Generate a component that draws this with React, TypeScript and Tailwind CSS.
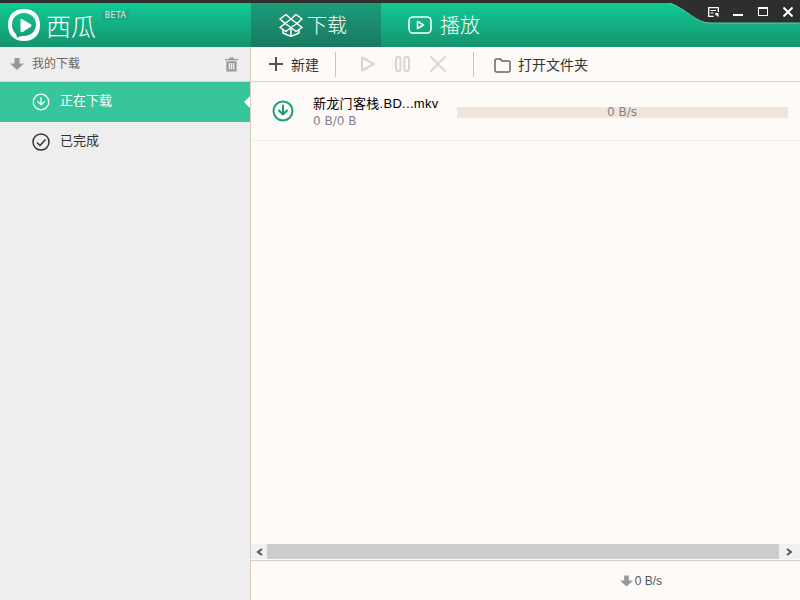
import React from "react";

function Logo() {
  return (
    <svg width="32" height="32" viewBox="0 0 32 32" className="shrink-0">
      <path fillRule="evenodd" fill="#fff" d="M16 0C26 0 32 6 32 16 32 26 26 32 16 32 6 32 0 26 0 16 0 6 6 0 16 0zM16 4C9 4 4 9 4 15.500 4 19 5 22 7 24 8.500 26 9 27 9 29 11 27.500 13 27 16 27 23 27 28 22 28 15.500 28 9 23 4 16 4z" />
      <path fill="#fff" d="M12.500 11.500c0-1.300 1-1.800 2.200-1.100l8 4.800c1 .7 1 1.800 0 2.500l-8 5.400c-1.200.6-2.200.1-2.200-1.100z" />
    </svg>
  );
}

function BoxIcon() {
  return (
    <svg width="24" height="24" viewBox="0 0 24 24" fill="none" stroke="#fff" strokeWidth="1.500" strokeLinejoin="round" className="shrink-0">
      <path d="M7 1.500 1 6 6 10.500 12 6z" />
      <path d="M17 1.500 23 6 18 10.500 12 6z" />
      <path d="M6 10.500 1 14.500 7 18.500 12 14.500z" />
      <path d="M18 10.500 23 14.500 17 18.500 12 14.500z" />
      <path d="M4 16.500v3.500l8 3.500 8-3.500v-3.500M12 14.500v9" />
    </svg>
  );
}

function PlayTabIcon() {
  return (
    <svg width="24" height="18" viewBox="0 0 24 18" fill="none" stroke="#fff" strokeWidth="1.600" className="shrink-0">
      <rect x="1" y="1" width="22" height="16" rx="4" />
      <path d="M9.500 5.500v7l6-3.500z" strokeLinejoin="round" />
    </svg>
  );
}

function DownArrow({ color = "#999", w = 14, h = 12 }: { color?: string; w?: number; h?: number }) {
  return (
    <svg width={w} height={h} viewBox="0 0 14 12" className="shrink-0">
      <path fill={color} d="M4.500 0h5v5.500H14L7 12 0 5.500h4.500z" />
    </svg>
  );
}

function CircleDown({ color, size, sw }: { color: string; size: number; sw: number }) {
  return (
    <svg width={size} height={size} viewBox="0 0 22 22" fill="none" stroke={color} strokeWidth={sw} className="shrink-0">
      <circle cx="11" cy="11" r="9.500" />
      <path d="M11 5.500v9M7 10.500l4 4 4-4" strokeLinecap="round" strokeLinejoin="round" />
    </svg>
  );
}

export default function App() {
  return (
    <div className="w-[800px] h-[600px] overflow-hidden flex flex-col relative bg-[#fefaf8]">
      <div className="font-['Liberation_Sans','Noto_Sans_CJK_SC',sans-serif] flex flex-col h-full">
        {/* top strip */}
        <div className="h-[3px] bg-[#2e2e2e] shrink-0" />
        {/* header */}
        <div className="h-[44px] shrink-0 flex bg-gradient-to-b from-[#0ecb95] to-[#15936f] text-white">
          <div className="w-[251px] shrink-0 flex items-center pl-[8px] relative">
            <Logo />
            <span className="ml-[6px] text-[25px] leading-[30px] font-light font-['Noto_Sans_CJK_SC',sans-serif]">西瓜</span>
            <span className="ml-[6px] -mt-[20px] w-[27px] h-[9px] bg-[#2aa184] text-[8px] leading-[9px] text-center text-[#d5f2e8] font-['DejaVu_Sans',sans-serif] tracking-[0.3px]">
              BETA
            </span>
          </div>
          <div className="w-[130px] shrink-0 flex items-center pl-[28px] gap-[4px] bg-gradient-to-b from-[#1b9c7a] to-[#197a60]">
            <BoxIcon />
            <span className="text-[20px] font-['Noto_Sans_CJK_SC',sans-serif] font-light">下载</span>
          </div>
          <div className="w-[130px] shrink-0 flex items-center pl-[27px] gap-[8px]">
            <PlayTabIcon />
            <span className="text-[20px] font-['Noto_Sans_CJK_SC',sans-serif] font-light">播放</span>
          </div>
        </div>

        {/* body */}
        <div className="flex-1 min-h-0 flex">
          {/* sidebar */}
          <div className="w-[250px] shrink-0 bg-[#eeeeee] flex flex-col">
            <div className="h-[35px] shrink-0 flex items-center pl-[10px] pr-[12px] border-b border-[#d8d2c8]">
              <DownArrow />
              <span className="ml-[8px] text-[12px] text-[#666]">我的下载</span>
              <svg width="13" height="15" viewBox="0 0 14 15" className="ml-auto shrink-0">
                <path fill="#999" fillRule="evenodd" d="M4.500 0h5v1.500H14V3H0V1.500h4.500zM1.500 4h11v11h-11zM4 6v7h1.500V6zM6.300 6v7h1.500V6zM8.600 6v7h1.500V6z" />
              </svg>
            </div>
            <div className="h-[40px] shrink-0 bg-[#37c59c] flex items-center pl-[32px] text-white relative">
              <CircleDown color="#fff" size={18} sw={1.500} />
              <span className="ml-[10px] text-[13px] leading-[18px] -mt-[2px]">正在下载</span>
              <div className="absolute right-0 top-[14px] w-0 h-0 border-y-[6px] border-y-transparent border-r-[6px] border-r-white" />
            </div>
            <div className="h-[40px] shrink-0 flex items-center pl-[32px] text-[#333]">
              <svg width="18" height="18" viewBox="0 0 18 18" fill="none" stroke="#333" strokeWidth="1.500" className="shrink-0">
                <circle cx="9" cy="9" r="8" />
                <path d="M5 9.500l3 3 5.500-6" />
              </svg>
              <span className="ml-[10px] text-[13px] leading-[18px] -mt-[2px]">已完成</span>
            </div>
          </div>

          {/* main */}
          <div className="flex-1 min-w-0 flex flex-col border-l border-[#d8cfc4]">
            <div className="h-[35px] shrink-0 flex items-center border-b border-[#d8d2c8] text-[#333]">
              <svg width="14" height="14" viewBox="0 0 14 14" className="ml-[18px] shrink-0">
                <path fill="#555" d="M6 0h2v6h6v2H8v6H6V8H0V6h6z" />
              </svg>
              <span className="ml-[8px] text-[14px] leading-[20px] mt-[2px]">新建</span>
              <div className="ml-[16px] w-px h-[25px] bg-[#c4c4c4]" />
              <svg width="16" height="16" viewBox="0 0 16 16" fill="none" stroke="#d6d6d6" strokeWidth="2" className="ml-[24px] shrink-0">
                <path d="M2 1.500v13l12-6.500z" strokeLinejoin="round" />
              </svg>
              <svg width="15" height="16" viewBox="0 0 15 16" fill="none" stroke="#d6d6d6" strokeWidth="2" className="ml-[19px] shrink-0">
                <rect x="1" y="1" width="4.500" height="14" rx="2" />
                <rect x="9.500" y="1" width="4.500" height="14" rx="2" />
              </svg>
              <svg width="18" height="16" viewBox="0 0 17 16" fill="none" stroke="#d6d6d6" strokeWidth="2" className="ml-[19px] shrink-0">
                <path d="M1 .5l15 15M16 .5l-15 15" />
              </svg>
              <div className="ml-[26px] w-px h-[25px] bg-[#c4c4c4]" />
              <svg width="17" height="15" viewBox="0 0 17 15" fill="none" stroke="#666" strokeWidth="1.500" className="ml-[20px] shrink-0 mt-[2px]">
                <path d="M2.500 1h4l1.500 2h6.500a1.500 1.500 0 0 1 1.500 1.500v8a1.500 1.500 0 0 1-1.500 1.500h-12A1.500 1.500 0 0 1 1 12.500V2.500A1.500 1.500 0 0 1 2.500 1z" strokeLinejoin="round" />
              </svg>
              <span className="ml-[7px] text-[14px] leading-[20px] mt-[2px]">打开文件夹</span>
            </div>

            <div className="flex-1 min-h-0 flex flex-col">
              <div className="h-[59px] shrink-0 flex items-center border-b border-[#f0eeee]">
                <div className="ml-[21px] shrink-0">
                  <CircleDown color="#1a9e7a" size={22} sw={2} />
                </div>
                <div className="ml-[19px] w-[144px] shrink-0 mt-[2px]">
                  <div className="text-[13px] leading-[16px] text-black whitespace-nowrap tracking-[0.3px]">新龙门客栈.BD...mkv</div>
                  <div className="text-[12px] leading-[14px] mt-[2px] text-[#85808f] font-['DejaVu_Sans',sans-serif]">0 B/0 B</div>
                </div>
                <div className="w-[331px] h-[11px] mt-[2px] bg-[#efe6d8] flex items-center justify-center text-[12px] leading-[11px] text-[#85808f] font-['DejaVu_Sans',sans-serif]">
                  <span className="-ml-[1px]">0 B/s</span>
                </div>
              </div>
              <div className="flex-1" />
              {/* scrollbar */}
              <div className="h-[15px] shrink-0 flex bg-[#f0f0f0] mb-[1px]">
                <div className="w-[16px] flex items-center justify-center shrink-0">
                  <svg width="7" height="8" viewBox="0 0 7 8" fill="none" stroke="#555" strokeWidth="2"><path d="M6 1 2 4l4 3" /></svg>
                </div>
                <div className="flex-1 bg-[#cdcdcd]" />
                <div className="w-[21px] flex items-center justify-center shrink-0">
                  <svg width="7" height="8" viewBox="0 0 7 8" fill="none" stroke="#555" strokeWidth="2"><path d="M1 1l4 3-4 3" /></svg>
                </div>
              </div>
            </div>

            <div className="h-[40px] shrink-0 border-t border-[#d8cfc4] flex items-center justify-end pr-[138px]">
              <DownArrow w={13} h={12} />
              <span className="ml-[2px] text-[12px] text-[#555]">0 B/s</span>
            </div>
          </div>
        </div>
      </div>

      {/* window corner overlay */}
      <div className="absolute top-0 right-0 w-[150px] h-[24px]">
        <svg width="150" height="24" viewBox="0 0 150 24" className="absolute inset-0">
          <path fill="#2e2e2e" d="M0 0h150v23H60C46 23 38 10 20 3H0z" />
          <path fill="none" stroke="#5fc9aa" strokeWidth="1" d="M20 3C38 10 46 23 60 23h90" />
        </svg>
        <svg width="11" height="10" viewBox="0 0 11 10" className="absolute left-[58px] top-[7px]">
          <path fill="none" stroke="#fff" strokeWidth="1.300" d="M10.300 5V.7H.7v8.600h5" />
          <path fill="#fff" d="M2.500 3h5.500v1H2.500zM2.500 5.500h3v1h-3zM7 6h4l-1 1 1 2-1 1-1-2-1 1z" />
        </svg>
        <div className="absolute left-[83px] top-[14px] w-[10px] h-[2px] bg-white" />
        <div className="absolute left-[108px] top-[7px] w-[10px] h-[9px] border border-white border-t-2" />
        <svg width="10" height="10" viewBox="0 0 10 10" className="absolute left-[133px] top-[7px]">
          <path fill="none" stroke="#fff" strokeWidth="2" d="M.5.5l9 9M9.500.5l-9 9" />
        </svg>
      </div>
    </div>
  );
}
